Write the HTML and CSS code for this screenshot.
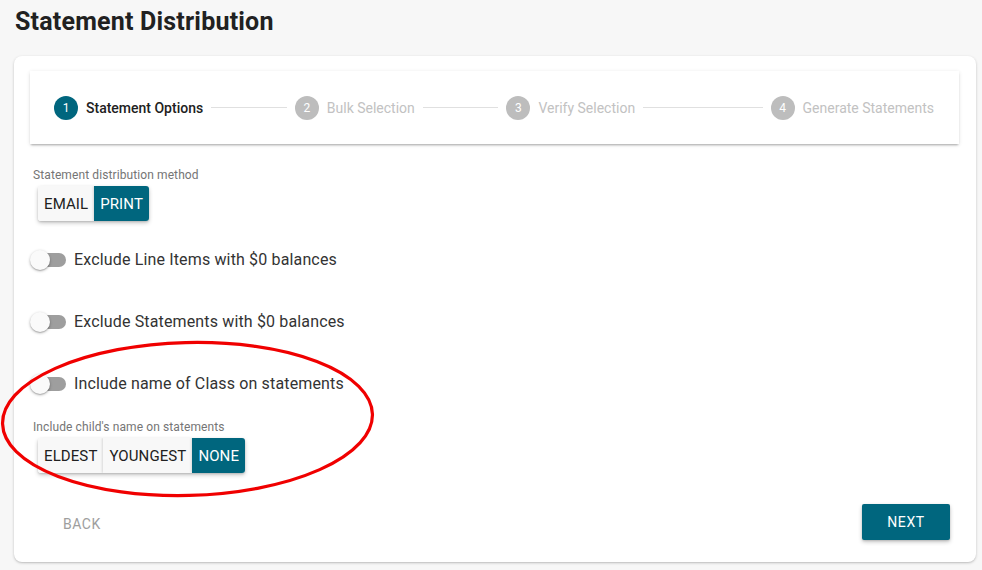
FILE: index.html
```html
<!DOCTYPE html>
<html>
<head>
<meta charset="utf-8">
<link rel="stylesheet" href="styles.css">
</head>
<body>
<h1 class="title">Statement Distribution</h1>
<div class="card">
  <div class="stepper">
    <div class="step active"><span class="num">1</span><span class="label">Statement Options</span></div>
    <div class="line"></div>
    <div class="step"><span class="num">2</span><span class="label">Bulk Selection</span></div>
    <div class="line"></div>
    <div class="step"><span class="num">3</span><span class="label">Verify Selection</span></div>
    <div class="line line-long"></div>
    <div class="step"><span class="num">4</span><span class="label">Generate Statements</span></div>
  </div>

  <div class="field">
    <div class="field-label">Statement distribution method</div>
    <div class="btn-group">
      <button class="seg">EMAIL</button>
      <button class="seg selected">PRINT</button>
    </div>
  </div>

  <div class="toggle-row first"><span class="toggle"><span class="track"></span><span class="thumb"></span></span><span class="toggle-text">Exclude Line Items with $0 balances</span></div>
  <div class="toggle-row"><span class="toggle"><span class="track"></span><span class="thumb"></span></span><span class="toggle-text">Exclude Statements with $0 balances</span></div>
  <div class="toggle-row"><span class="toggle"><span class="track"></span><span class="thumb"></span></span><span class="toggle-text">Include name of Class on statements</span></div>

  <div class="field second">
    <div class="field-label">Include child's name on statements</div>
    <div class="btn-group">
      <button class="seg">ELDEST</button>
      <button class="seg">YOUNGEST</button>
      <button class="seg selected">NONE</button>
    </div>
  </div>

  <div class="actions">
    <button class="back">BACK</button>
    <button class="next">NEXT</button>
  </div>
</div>
<svg class="annotation" width="982" height="570" viewBox="0 0 982 570">
  <ellipse cx="187.5" cy="419" rx="185" ry="76.5" transform="rotate(-1.5 187.5 419)" fill="none" stroke="#f00000" stroke-width="3.2"/>
</svg>
</body>
</html>
```
FILE: styles.css
```css
* { box-sizing: border-box; }
html, body { margin: 0; padding: 0; }
body {
  background: #f7f7f7;
  font-family: Roboto, "Noto Sans", Arial, sans-serif;
  color: #212121;
  width: 982px;
  height: 570px;
  overflow: hidden;
  position: relative;
}
.title {
  margin: 0;
  padding: 8px 0 0 15px;
  height: 56px;
  font-size: 25px;
  font-weight: 700;
  letter-spacing: 0.2px;
  line-height: 28px;
  color: #212121;
}
.card {
  margin-left: 14px;
  width: 962px;
  height: 506px;
  background: #fff;
  border-radius: 8px;
  box-shadow: 0 1px 3px rgba(0,0,0,0.2), 0 1px 1px rgba(0,0,0,0.06);
  padding: 15px 17px 0 16px;
  position: relative;
}
.stepper {
  height: 73px;
  background: #fff;
  box-shadow: 0 2px 2px -1px rgba(0,0,0,0.28), 0 1px 4px rgba(0,0,0,0.12);
  display: flex;
  align-items: center;
  padding: 0 25px 0 24px;
}
.step {
  display: flex;
  align-items: center;
  gap: 8px;
  font-size: 14px;
  color: #c2c2c2;
}
.step .num {
  width: 24px;
  height: 24px;
  border-radius: 50%;
  background: #bdbdbd;
  color: #fff;
  font-size: 12px;
  display: flex;
  align-items: center;
  justify-content: center;
}
.step.active { color: #212121; font-weight: 500; }
.step.active .num { background: #00667e; font-weight: 400; }
.line {
  flex: 76 1 0;
  height: 1px;
  background: #e0e0e0;
  margin: 0 8px;
}
.line.line-long { flex-grow: 120; }

.field { margin-top: 24px; padding-left: 3px; }
.field.second { margin-top: 26px; }
.field-label {
  font-size: 12px;
  letter-spacing: 0.1px;
  color: #757575;
  line-height: 14px;
  height: 15px;
}
.btn-group {
  display: inline-flex;
  margin-left: 5px;
  margin-top: 3px;
  border-radius: 3px;
  box-shadow: 0 2px 4px rgba(0,0,0,0.22), 0 1px 2px rgba(0,0,0,0.12);
  overflow: hidden;
}
.seg {
  border: none;
  background: #f8f8f8;
  color: #212121;
  font-family: Roboto, "Noto Sans", Arial, sans-serif;
  font-size: 15px;
  font-weight: 400;
  height: 35px;
  padding: 0 6px;
  margin: 0;
  letter-spacing: 0.1px;
}
.seg + .seg { box-shadow: -1px 0 2px rgba(0,0,0,0.12); }
.seg.selected { background: #00667e; color: #fff; }

.toggle-row {
  display: flex;
  align-items: center;
  height: 20px;
  margin-top: 42px;
  font-size: 16px;
  letter-spacing: 0.15px;
  color: #333;
}
.toggle-row.first { margin-top: 29px; }
.toggle {
  position: relative;
  width: 36px;
  height: 20px;
  margin-right: 8px;
  flex: none;
}
.track {
  position: absolute;
  left: 2px;
  top: 3px;
  width: 34px;
  height: 14px;
  border-radius: 7px;
  background: #9e9e9e;
}
.thumb {
  position: absolute;
  left: 0;
  top: 0;
  width: 20px;
  height: 20px;
  border-radius: 50%;
  background: #fafafa;
  box-shadow: 0 1px 3px rgba(0,0,0,0.3), 0 1px 1px rgba(0,0,0,0.14);
}
.toggle-text { line-height: 20px; }

.actions {
  display: flex;
  justify-content: space-between;
  align-items: center;
  margin-top: 31px;
  padding: 0 9px 0 17px;
}
.back {
  border: none;
  background: transparent;
  color: #9e9e9e;
  font-family: Roboto, "Noto Sans", Arial, sans-serif;
  font-size: 14px;
  font-weight: 400;
  letter-spacing: 0.5px;
  height: 36px;
  padding: 4px 16px 0;
}
.next {
  border: none;
  background: #00667e;
  color: #fff;
  font-family: Roboto, "Noto Sans", Arial, sans-serif;
  font-size: 14px;
  font-weight: 400;
  letter-spacing: 0.6px;
  height: 36px;
  width: 88px;
  border-radius: 2px;
  box-shadow: 0 2px 4px rgba(0,0,0,0.22), 0 1px 2px rgba(0,0,0,0.12);
}
.annotation {
  position: absolute;
  left: 0;
  top: 0;
  pointer-events: none;
}
```
